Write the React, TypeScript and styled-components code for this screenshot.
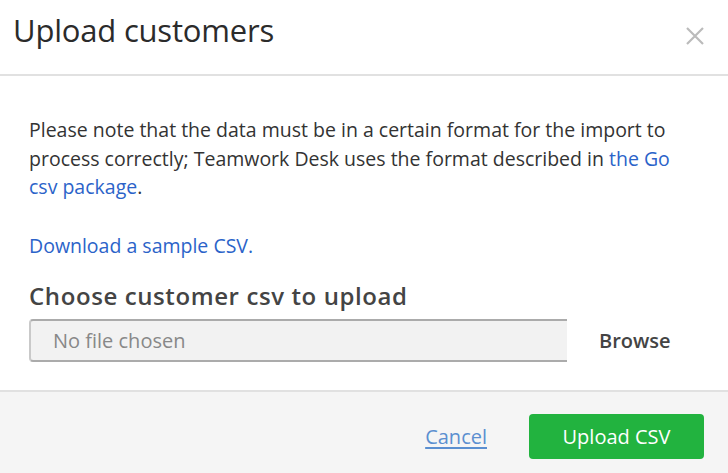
import React from 'react';
import styled, { createGlobalStyle } from 'styled-components';

const GlobalStyle = createGlobalStyle`
  html, body {
    margin: 0;
    padding: 0;
    background: #fff;
  }
  body {
    font-family: "Open Sans", Lato, sans-serif;
    color: #333;
  }
`;

const App: React.FC = () => {
  return (
    <>
      <GlobalStyle />
      <Modal>
        <Header>
          <Title>Upload customers</Title>
          <Close aria-label="Close">
            <svg width="18" height="18" viewBox="0 0 18 18">
              <path d="M1 1 L17 17 M17 1 L1 17" stroke="#bbb" strokeWidth="2.2" />
            </svg>
          </Close>
        </Header>
        <Body>
          <Note>
            Please note that the data must be in a certain format for the import to
            process correctly; Teamwork Desk uses the format described in{' '}
            <Link href="#">the Go csv package</Link>.
          </Note>
          <SampleLink href="#">Download a sample CSV.</SampleLink>
          <Label>Choose customer csv to upload</Label>
          <FileRow>
            <FileBox>No file chosen</FileBox>
            <Browse>Browse</Browse>
          </FileRow>
        </Body>
        <Footer>
          <CancelLink href="#">Cancel</CancelLink>
          <UploadButton>Upload CSV</UploadButton>
        </Footer>
      </Modal>
    </>
  );
};

export default App;

const Modal = styled.div`
  width: 728px;
  height: 473px;
  display: flex;
  flex-direction: column;
  background: #fff;
`;

const Header = styled.div`
  height: 74px;
  display: flex;
  align-items: flex-start;
  justify-content: space-between;
  padding: 0 24px 0 13px;
  border-bottom: 2px solid #e1e1e1;
`;

const Title = styled.h1`
  margin: 11px 0 0;
  font-size: 31px;
  line-height: 38px;
  font-weight: 400;
  color: #2b2b2b;
  letter-spacing: -0.2px;
`;

const Close = styled.button`
  margin-top: 27px;
  padding: 0;
  border: 0;
  background: transparent;
  cursor: pointer;
  display: flex;
`;

const Body = styled.div`
  flex: 1;
  padding: 40px 29px 0;
  display: flex;
  flex-direction: column;
`;

const Note = styled.p`
  margin: 0;
  width: 662px;
  font-size: 19.5px;
  line-height: 28.5px;
  color: #333;
`;

const Link = styled.a`
  color: #2b63c9;
  text-decoration: none;
`;

const SampleLink = styled(Link)`
  margin-top: 29px;
  font-size: 19.5px;
  line-height: 29px;
`;

const Label = styled.h2`
  margin: 21px 0 0;
  font-size: 24px;
  line-height: 30px;
  font-weight: 600;
  letter-spacing: 0.6px;
  color: #444;
`;

const FileRow = styled.div`
  display: flex;
  align-items: center;
  margin-top: 8px;
`;

const FileBox = styled.div`
  width: 538px;
  height: 43px;
  box-sizing: border-box;
  display: flex;
  align-items: center;
  padding-left: 22px;
  background: #f2f2f2;
  border: 2px solid #ababab;
  border-left-color: #c9c9c9;
  border-right: 0;
  border-radius: 4px 0 0 4px;
  font-size: 20px;
  color: #888;
`;

const Browse = styled.span`
  margin-left: 32px;
  font-size: 20px;
  font-weight: 600;
  color: #444;
`;

const Footer = styled.div`
  height: 83px;
  box-sizing: border-box;
  border-top: 2px solid #e1e1e1;
  background: #f5f5f5;
  display: flex;
  align-items: center;
  justify-content: flex-end;
  padding: 7px 24px 0 0;
  gap: 42px;
`;

const CancelLink = styled.a`
  font-size: 20px;
  color: #5b8fd0;
  text-decoration: underline;
  text-underline-offset: 3px;
`;

const UploadButton = styled.button`
  width: 175px;
  height: 45px;
  border: 0;
  border-radius: 4px;
  background: #22b33f;
  color: #fff;
  font-family: inherit;
  font-size: 20px;
  cursor: pointer;
`;
